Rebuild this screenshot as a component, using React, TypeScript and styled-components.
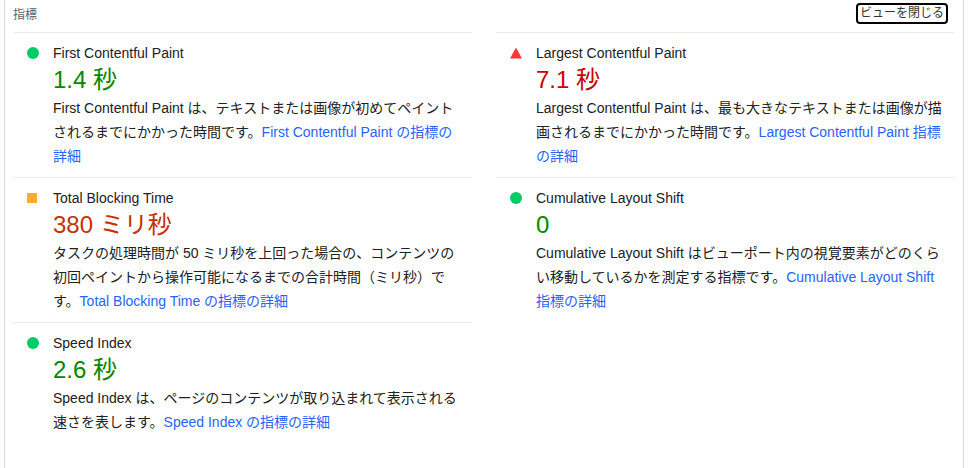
import styled, { createGlobalStyle } from "styled-components";

const GlobalStyle = createGlobalStyle`
  body {
    margin: 0;
    background: #fff;
    font-family: "Liberation Sans", Arial, "Noto Sans CJK JP", sans-serif;
  }
`;

const Panel = styled.div`
  box-sizing: border-box;
  margin-left: 4px;
  width: 960px;
  min-height: 100vh;
  padding: 0 8px;
  border-left: 1px solid #dadada;
  border-right: 1px solid #dadada;
  color: #212121;
`;

const Header = styled.div`
  display: flex;
  align-items: center;
  justify-content: space-between;
  height: 27px;
  padding: 0 7px 5px 0;
`;

const HeaderTitle = styled.span`
  font-size: 12px;
  color: #5f5f5f;
`;

const CloseButton = styled.button`
  font-family: inherit;
  font-size: 12px;
  line-height: 17px;
  padding: 0 2px;
  color: #333;
  background: #fff;
  border: 2px solid #000;
  border-radius: 4px;
  cursor: pointer;
`;

const Grid = styled.div`
  display: grid;
  grid-template-columns: 1fr 1fr;
  column-gap: 24px;
`;

const Metric = styled.div`
  display: flex;
  border-top: 1px solid #ebebeb;
  padding: 8px 8px 9px 14px;
`;

type Kind = "pass" | "average" | "fail";

const Icon = styled.span<{ $kind: Kind }>`
  flex: none;
  width: 12px;
  height: 24px;
  margin-right: 14px;
  display: flex;
  align-items: center;
  &::before {
    content: "";
    display: block;
    ${({ $kind }) =>
      $kind === "pass"
        ? "width: 12px; height: 12px; border-radius: 50%; background: #0c6;"
        : $kind === "average"
        ? "width: 10px; height: 10px; background: #fa3;"
        : "width: 12px; height: 11px; background: #f33; clip-path: polygon(50% 0, 100% 100%, 0 100%);"}
  }
`;

const Body = styled.div`
  flex: 1;
  min-width: 0;
`;

const Title = styled.div`
  font-size: 14px;
  line-height: 24px;
`;

const Value = styled.div<{ $kind: Kind }>`
  font-size: 24px;
  line-height: 30px;
  color: ${({ $kind }) =>
    $kind === "pass" ? "#080" : $kind === "average" ? "#c33300" : "#c00"};
`;

const Description = styled.div`
  margin-top: 1px;
  font-size: 14px;
  line-height: 24px;
  color: #212121;
  line-break: strict;
`;

const Link = styled.a`
  color: #2962ff;
  text-decoration: none;
`;

const metrics: {
  title: string;
  value: string;
  kind: Kind;
  text: string;
  link: string;
}[] = [
  {
    title: "First Contentful Paint",
    value: "1.4 秒",
    kind: "pass",
    text: "First Contentful Paint は、テキストまたは画像が初めてペイントされるまでにかかった時間です。",
    link: "First Contentful Paint の指標の詳細",
  },
  {
    title: "Largest Contentful Paint",
    value: "7.1 秒",
    kind: "fail",
    text: "Largest Contentful Paint は、最も大きなテキストまたは画像が描画されるまでにかかった時間です。",
    link: "Largest Contentful Paint 指標の詳細",
  },
  {
    title: "Total Blocking Time",
    value: "380 ミリ秒",
    kind: "average",
    text: "タスクの処理時間が 50 ミリ秒を上回った場合の、コンテンツの初回ペイントから操作可能になるまでの合計時間（ミリ秒）です。",
    link: "Total Blocking Time の指標の詳細",
  },
  {
    title: "Cumulative Layout Shift",
    value: "0",
    kind: "pass",
    text: "Cumulative Layout Shift はビューポート内の視覚要素がどのくらい移動しているかを測定する指標です。",
    link: "Cumulative Layout Shift 指標の詳細",
  },
  {
    title: "Speed Index",
    value: "2.6 秒",
    kind: "pass",
    text: "Speed Index は、ページのコンテンツが取り込まれて表示される速さを表します。",
    link: "Speed Index の指標の詳細",
  },
];

export default function App() {
  return (
    <>
      <GlobalStyle />
      <Panel>
        <Header>
          <HeaderTitle>指標</HeaderTitle>
          <CloseButton>ビューを閉じる</CloseButton>
        </Header>
        <Grid>
          {metrics.map((m) => (
            <Metric key={m.title}>
              <Icon $kind={m.kind} />
              <Body>
                <Title>{m.title}</Title>
                <Value $kind={m.kind}>{m.value}</Value>
                <Description>
                  {m.text}
                  <Link href="#">{m.link}</Link>
                </Description>
              </Body>
            </Metric>
          ))}
        </Grid>
      </Panel>
    </>
  );
}
